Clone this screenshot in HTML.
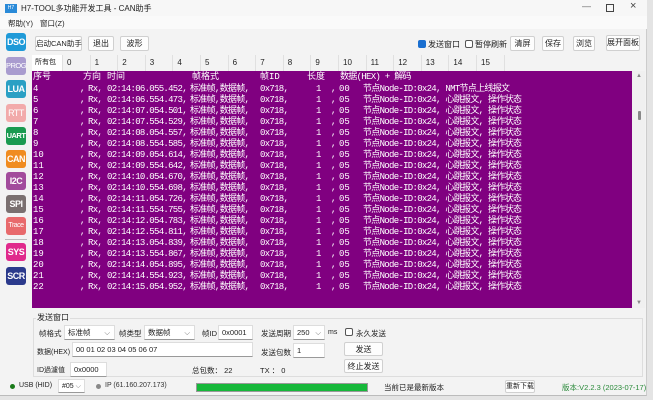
<!DOCTYPE html>
<html><head><meta charset="utf-8"><style>
*{margin:0;padding:0;box-sizing:border-box}
body{width:653px;height:400px;background:#e4e4e4;position:relative;overflow:hidden;font-family:"Liberation Sans","Noto Sans CJK SC",sans-serif;font-size:8px;color:#222}
.a{position:absolute;white-space:nowrap}
#win{position:absolute;left:0;top:0;width:647px;height:396px;background:#f3f3f3;border-right:1px solid #ccc;border-bottom:1px solid #bbb}
.btn{position:absolute;background:#fdfdfd;border:1px solid #d0d0d0;border-radius:2px;text-align:center;font-size:8px;line-height:13px;white-space:nowrap}
.ic{position:absolute;left:6px;width:20px;height:18px;border-radius:3px;color:#fff;font-size:9px;font-weight:bold;text-align:center;line-height:18px;overflow:hidden;white-space:nowrap;letter-spacing:-0.5px}
#log{position:absolute;left:32px;top:71px;width:600px;height:237px;background:#800080;color:#fff;font-family:"Liberation Mono","Noto Sans CJK SC",monospace;font-size:9px;overflow:hidden}
#log .a{line-height:11px}
.m{letter-spacing:-0.7px}
.inp{position:absolute;background:#fff;border:1px solid #ddd;border-bottom:1px solid #999;font-size:7.5px;line-height:13px;padding-left:3px;white-space:nowrap}
.cb{position:absolute;width:8px;height:8px;border:1px solid #555;border-radius:2px;background:#fff}
.tab{position:absolute;top:55px;height:16px;width:28px;border-right:1px solid #e0e0e0;font-size:8px;line-height:16px;padding-left:4px;background:#f3f3f3;white-space:nowrap}
.s7{font-size:7.5px}
</style></head><body>
<div id="win">
<div class="a" style="left:0;top:0;width:647px;height:16px;background:#f7f7f7"></div>
<div class="a" style="left:5px;top:4px;width:12px;height:9px;background:#2a8ad8;color:#fff;font-size:5px;line-height:9px;text-align:center">H7</div>
<div class="a" style="left:21px;top:3px;font-size:8px">H7-TOOL多功能开发工具 - CAN助手</div>
<div class="a" style="left:582px;top:1px;font-size:9px;color:#666">—</div>
<div class="a" style="left:606px;top:4px;width:8px;height:8px;border:1px solid #444"></div>
<div class="a" style="left:630px;top:0px;font-size:11px;color:#444">×</div>
<div class="a" style="left:0;top:16px;width:647px;height:13px;background:#fafafa"></div>
<div class="a" style="left:8px;top:18px;font-size:7.5px">帮助(Y)</div>
<div class="a" style="left:40px;top:18px;font-size:7.5px">窗口(Z)</div>

<div class="ic" style="top:33px;background:#1f9ad8">DSO</div>
<div class="ic" style="top:57px;background:#a99ccf;font-weight:normal;font-size:7.5px">PROG</div>
<div class="ic" style="top:80px;background:#2aa0c4">LUA</div>
<div class="ic" style="top:104px;background:#f2aaaa;font-weight:normal">RTT</div>
<div class="ic" style="top:127px;background:#1a9a50;font-size:7.5px">UART</div>
<div class="ic" style="top:150px;background:#f08c20">CAN</div>
<div class="ic" style="top:172px;background:#a24c9c">I2C</div>
<div class="ic" style="top:195px;background:#7a7070">SPI</div>
<div class="ic" style="top:217px;background:#e86a6c;font-weight:normal;font-size:7px">Trace</div>
<div class="a" style="left:5px;top:239px;width:22px;height:1px;background:#bbb"></div>
<div class="ic" style="top:243px;background:#e02a8c">SYS</div>
<div class="ic" style="top:267px;background:#2b3a8c">SCR</div>

<div class="btn" style="left:35px;top:36px;width:47px;height:15px;font-size:7.5px">启动CAN助手</div>
<div class="btn" style="left:88px;top:36px;width:26px;height:15px">退出</div>
<div class="btn" style="left:120px;top:36px;width:29px;height:15px">波形</div>
<div class="cb" style="left:418px;top:40px;background:#1a6fd0;border-color:#1a6fd0"></div>
<div class="a" style="left:428px;top:39px">发送窗口</div>
<div class="cb" style="left:465px;top:40px"></div>
<div class="a" style="left:475px;top:39px">暂停刷新</div>
<div class="btn" style="left:510px;top:36px;width:25px;height:15px">清屏</div>
<div class="btn" style="left:542px;top:36px;width:22px;height:15px">保存</div>
<div class="btn" style="left:573px;top:36px;width:22px;height:15px">浏览</div>
<div class="btn" style="left:606px;top:35px;width:34px;height:16px">展开面板</div>

<div class="tab" style="left:32px;width:31px;background:#fff;font-size:7px;padding-left:3px">所有包</div>
<div id="tabs"></div>

<div id="log"></div>
<div class="a" style="left:632px;top:71px;width:13px;height:237px;background:#f0f0f0"></div>
<div class="a" style="left:638px;top:111px;width:3px;height:9px;background:#888;border-radius:1px"></div>
<div class="a" style="left:636px;top:73px;font-size:6px;color:#888">▲</div>
<div class="a" style="left:636px;top:300px;font-size:6px;color:#888">▼</div>

<div class="a" style="left:33px;top:318px;width:610px;height:59px;border:1px solid #ddd"></div>
<div class="a" style="left:36px;top:312px;background:#f3f3f3;padding:0 1px">发送窗口</div>
<div class="a s7" style="left:39px;top:328px">帧格式</div>
<div class="inp" style="left:64px;top:325px;width:51px;height:15px">标准帧<span style="position:absolute;right:4px;color:#777">⌵</span></div>
<div class="a s7" style="left:119px;top:328px">帧类型</div>
<div class="inp" style="left:144px;top:325px;width:51px;height:15px">数据帧<span style="position:absolute;right:4px;color:#777">⌵</span></div>
<div class="a s7" style="left:202px;top:328px">帧ID</div>
<div class="inp" style="left:218px;top:325px;width:35px;height:15px">0x0001</div>
<div class="a s7" style="left:261px;top:328px">发送周期</div>
<div class="inp" style="left:293px;top:325px;width:32px;height:15px">250<span style="position:absolute;right:3px;color:#777">⌵</span></div>
<div class="a" style="left:328px;top:329px;font-size:7px">ms</div>
<div class="cb" style="left:345px;top:328px"></div>
<div class="a s7" style="left:356px;top:328px">永久发送</div>
<div class="a" style="left:37px;top:347px;font-size:7px">数据(HEX)</div>
<div class="inp" style="left:72px;top:342px;width:181px;height:15px">00 01 02 03 04 05 06 07</div>
<div class="a s7" style="left:261px;top:347px">发送包数</div>
<div class="inp" style="left:293px;top:343px;width:32px;height:15px">1</div>
<div class="btn" style="left:344px;top:342px;width:39px;height:14px">发送</div>
<div class="a" style="left:37px;top:365px;font-size:7px">ID過濾值</div>
<div class="inp" style="left:70px;top:362px;width:37px;height:15px">0x0000</div>
<div class="a s7" style="left:192px;top:365px">总包数： 22</div>
<div class="a s7" style="left:260px;top:365px">TX ： 0</div>
<div class="btn" style="left:344px;top:359px;width:39px;height:14px">终止发送</div>

<div class="a" style="left:10px;top:384px;width:5px;height:5px;border-radius:50%;background:#1a7a1a"></div>
<div class="a" style="left:19px;top:382px;font-size:7px">USB (HID)</div>
<div class="inp" style="left:58px;top:379px;width:27px;height:14px;font-size:7px">#05 <span style="color:#777">⌵</span></div>
<div class="a" style="left:96px;top:384px;width:5px;height:5px;border-radius:50%;background:#888"></div>
<div class="a" style="left:105px;top:382px;font-size:7px;color:#333">IP (61.160.207.173)</div>
<div class="a" style="left:196px;top:383px;width:172px;height:9px;background:#16b83a;border:1px solid #999"></div>
<div class="a" style="left:384px;top:382px;font-size:7.5px">当前已是最新版本</div>
<div class="btn" style="left:505px;top:380px;width:30px;height:13px;font-size:7px;line-height:11px">重新下载</div>
<div class="a" style="left:562px;top:382px;font-size:7.5px;color:#2a8a3a">版本:V2.2.3 (2023-07-17)</div>
</div>
<script>
var t=document.getElementById('tabs'),h='';
for(var i=0;i<16;i++){h+='<div class="tab" style="left:'+(63+i*27.6)+'px;width:27.6px">'+i+'</div>';}
t.innerHTML=h;
var times=["06.055.452","06.554.473","07.054.501","07.554.529","08.054.557","08.554.585","09.054.614","09.554.642","10.054.670","10.554.698","11.054.726","11.554.755","12.054.783","12.554.811","13.054.839","13.554.867","14.054.895","14.554.923","15.054.952"];
var L=document.getElementById('log'),s='';
function p(x,y,txt,c){return '<div class="a'+(c?' m':'')+'" style="left:'+(x-32)+'px;top:'+(y-71-5.5)+'px">'+txt+'</div>';}
var y0=77.5;
s+=p(33,y0,'序号')+p(83,y0,'方向')+p(107,y0,'时间')+p(192,y0,'帧格式')+p(260,y0,'帧ID')+p(307,y0,'长度')+p(340,y0,'数据(HEX) + 解码',1);
for(var k=0;k<19;k++){var y=89+k*11.05;
s+=p(33,y,(k+4))+p(80,y,',')+p(88,y,'Rx,',1)+p(107,y,'02:14:'+times[k]+',',1)+p(190,y,'标准帧,数据帧,',1)+p(260,y,'0x718,',1)+p(316,y,'1')+p(331,y,',')+p(339,y,k==0?'00':'05')+p(363,y,k==0?'节点Node-ID:0x24, NMT节点上线报文':'节点Node-ID:0x24, 心跳报文, 操作状态',1);}
L.innerHTML=s;
</script>
</body></html>
